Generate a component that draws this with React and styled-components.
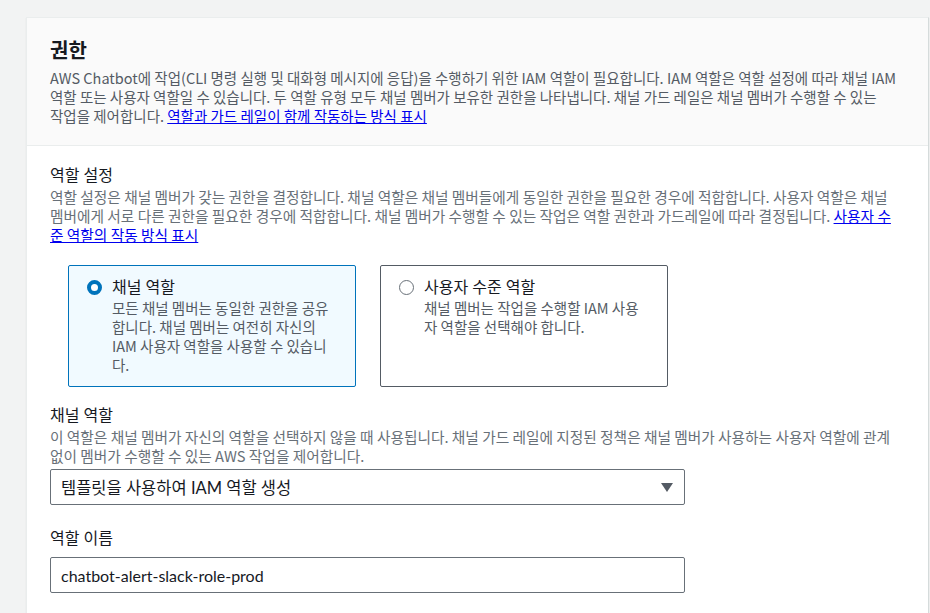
import React from 'react';
import styled, { createGlobalStyle } from 'styled-components';

const GlobalStyle = createGlobalStyle`
  body {
    margin: 0;
    background: #f2f3f3;
    font-family: Lato, "Noto Sans CJK KR", sans-serif;
  }
`;

const Card = styled.section`
  margin: 17px 1px 0 26px;
  background: #ffffff;
  border: 1px solid #eaeded;
  border-right-color: #d5dbdb;
  box-shadow: 0 1px 1px rgba(0, 28, 36, 0.1);
`;

const Header = styled.div`
  background: #fafafa;
  border-bottom: 1px solid #eaeded;
  padding: 18px 30px 20px 23px;
`;

const Title = styled.h2`
  margin: 0 0 4px;
  font-size: 20px;
  font-weight: 700;
  line-height: 28px;
  color: #16191f;
`;

const Text = styled.p`
  margin: 0;
  font-family: "Noto Sans CJK KR", Lato, sans-serif;
  font-size: ${(p) => (p.muted ? '14.7px' : '14.5px')};
  line-height: 19px;
  color: ${(p) => (p.muted ? '#687078' : '#545b64')};
  word-break: ${(p) => (p.keepWords ? 'keep-all' : 'normal')};
`;

const Link = styled.a`
  color: #0000ee;
  text-decoration: underline;
`;

const Body = styled.div`
  padding: 18px 33px 20px 23px;
`;

const Field = styled.div`
  margin-bottom: ${(p) => p.gap || 0}px;
`;

const Label = styled.div`
  font-size: 16px;
  line-height: 22px;
  color: #16191f;
  margin-bottom: 1px;
`;

const Tiles = styled.div`
  display: flex;
  gap: 24px;
  margin: 21px 0 17px 18px;
`;

const Tile = styled.label`
  display: flex;
  gap: 10px;
  box-sizing: border-box;
  width: 288px;
  height: 122px;
  padding: 10px 18px;
  border: 1px solid ${(p) => (p.checked ? '#0073bb' : '#545b64')};
  border-radius: 2px;
  background: ${(p) => (p.checked ? '#f1faff' : '#ffffff')};
`;

const Radio = styled.span`
  flex: none;
  box-sizing: border-box;
  width: 15px;
  height: 15px;
  margin-top: 4px;
  border-radius: 50%;
  border: ${(p) => (p.checked ? '4.5px solid #0073bb' : '1.5px solid #687078')};
  background: #ffffff;
`;

const TileTitle = styled.div`
  font-size: 16px;
  line-height: 22px;
  color: #16191f;
`;

const Select = styled.div`
  display: flex;
  align-items: center;
  justify-content: space-between;
  box-sizing: border-box;
  width: 635px;
  height: 36px;
  margin-top: 4px;
  padding: 0 11px 0 10px;
  border: 1px solid #687078;
  border-radius: 2px;
  font-size: 16.5px;
  color: #16191f;
`;

const Caret = styled.span`
  width: 0;
  height: 0;
  border-left: 6px solid transparent;
  border-right: 6px solid transparent;
  border-top: 9px solid #545b64;
`;

const Input = styled.input`
  display: block;
  box-sizing: border-box;
  width: 635px;
  height: 36px;
  margin-top: 8px;
  padding: 0 10px;
  border: 1px solid #687078;
  border-radius: 2px;
  font-family: Lato, "Noto Sans CJK KR", sans-serif;
  font-size: 16px;
  color: #16191f;
  background: #ffffff;
`;

export default function App() {
  return (
    <>
      <GlobalStyle />
      <Card>
        <Header>
          <Title>권한</Title>
          <Text keepWords>
            AWS Chatbot에 작업(CLI 명령 실행 및 대화형 메시지에 응답)을 수행하기 위한 IAM 역할이 필요합니다. IAM 역할은 역할 설정에 따라 채널 IAM 역할 또는 사용자 역할일 수 있습니다. 두 역할 유형 모두 채널 멤버가 보유한 권한을 나타냅니다. 채널 가드 레일은 채널 멤버가 수행할 수 있는 작업을 제어합니다.{' '}
            <Link href="#">역할과 가드 레일이 함께 작동하는 방식 표시</Link>
          </Text>
        </Header>
        <Body>
          <Field>
            <Label>역할 설정</Label>
            <Text muted>
              역할 설정은 채널 멤버가 갖는 권한을 결정합니다. 채널 역할은 채널 멤버들에게 동일한 권한을 필요한 경우에 적합합니다. 사용자 역할은 채널 멤버에게 서로 다른 권한을 필요한 경우에 적합합니다. 채널 멤버가 수행할 수 있는 작업은 역할 권한과 가드레일에 따라 결정됩니다.{' '}
              <Link href="#">사용자 수준 역할의 작동 방식 표시</Link>
            </Text>
          </Field>
          <Tiles>
            <Tile checked>
              <Radio checked />
              <div>
                <TileTitle>채널 역할</TileTitle>
                <Text>모든 채널 멤버는 동일한 권한을 공유합니다. 채널 멤버는 여전히 자신의 IAM 사용자 역할을 사용할 수 있습니다.</Text>
              </div>
            </Tile>
            <Tile>
              <Radio />
              <div>
                <TileTitle>사용자 수준 역할</TileTitle>
                <Text>채널 멤버는 작업을 수행할 IAM 사용자 역할을 선택해야 합니다.</Text>
              </div>
            </Tile>
          </Tiles>
          <Field gap={22}>
            <Label>채널 역할</Label>
            <Text muted>
              이 역할은 채널 멤버가 자신의 역할을 선택하지 않을 때 사용됩니다. 채널 가드 레일에 지정된 정책은 채널 멤버가 사용하는 사용자 역할에 관계없이 멤버가 수행할 수 있는 AWS 작업을 제어합니다.
            </Text>
            <Select>
              <span>템플릿을 사용하여 IAM 역할 생성</span>
              <Caret />
            </Select>
          </Field>
          <Field>
            <Label>역할 이름</Label>
            <Input defaultValue="chatbot-alert-slack-role-prod" />
          </Field>
        </Body>
      </Card>
    </>
  );
}
